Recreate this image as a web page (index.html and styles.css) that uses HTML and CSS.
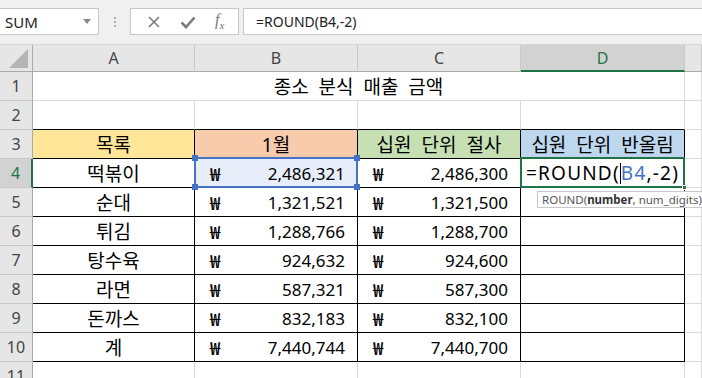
FILE: index.html
```html
<!DOCTYPE html>
<html lang="ko">
<head>
    <meta charset="UTF-8">
    <title>종소 분식 매출 금액</title>
    <link rel="stylesheet" href="styles.css">
</head>
<body>
    <div class="toolbar">
        <div class="nameBox">
            <span>SUM</span>
            <svg class="arrow" width="8" height="5" viewBox="0 0 8 5"><path d="M0 0h8L4 5z" fill="#8a8a8a"/></svg>
        </div>
        <div class="grip"><i></i><i></i><i></i></div>
        <div class="fnBox">
            <svg width="14" height="14" viewBox="0 0 14 14"><path d="M2 2l10 10M12 2L2 12" stroke="#7a7a7a" stroke-width="1.6"/></svg>
            <svg width="16" height="14" viewBox="0 0 16 14"><path d="M1.5 7.5l4.5 4.5L14.5 2.5" stroke="#7a7a7a" stroke-width="2.6" fill="none"/></svg>
            <span class="fx"><i>f</i><sub>x</sub></span>
        </div>
        <div class="formula">=ROUND(B4,-2)</div>
    </div>

    <div class="sheet">
        <!-- header row -->
        <div class="corner"><span class="tri"></span></div>
        <div class="colHead">A</div>
        <div class="colHead">B</div>
        <div class="colHead">C</div>
        <div class="colHead sel">D</div>
        <div class="colHead"></div>

        <!-- row 1 -->
        <div class="rowHead">1</div>
        <div class="cell title kr">종소 분식 매출 금액</div>
        <div class="cell"></div>

        <!-- row 2 -->
        <div class="rowHead">2</div>
        <div class="cell top"></div>
        <div class="cell top"></div>
        <div class="cell top"></div>
        <div class="cell top"></div>
        <div class="cell"></div>

        <!-- row 3 -->
        <div class="rowHead">3</div>
        <div class="cell box center kr yellow">목록</div>
        <div class="cell box center kr peach">1월</div>
        <div class="cell box center kr green">십원 단위 절사</div>
        <div class="cell box center kr blue">십원 단위 반올림</div>
        <div class="cell"></div>

        <!-- row 4 -->
        <div class="rowHead active">4</div>
        <div class="cell box center kr">떡볶이</div>
        <div class="cell box money ref">
            <span class="won">₩</span><span>2,486,321</span>
            <b class="h tl"></b><b class="h tr"></b><b class="h bl"></b><b class="h br"></b>
        </div>
        <div class="cell box money"><span class="won">₩</span><span>2,486,300</span></div>
        <div class="cell box editing">
            <span>=ROUND(</span><span class="caret"></span><span class="refText">B4</span><span>,-2)</span>
            <b class="fill"></b>
            <div class="tip">ROUND(<b>number</b>, num_digits)</div>
        </div>
        <div class="cell"></div>

        <!-- row 5 -->
        <div class="rowHead">5</div>
        <div class="cell box center kr">순대</div>
        <div class="cell box money"><span class="won">₩</span><span>1,321,521</span></div>
        <div class="cell box money"><span class="won">₩</span><span>1,321,500</span></div>
        <div class="cell box"></div>
        <div class="cell"></div>

        <!-- row 6 -->
        <div class="rowHead">6</div>
        <div class="cell box center kr">튀김</div>
        <div class="cell box money"><span class="won">₩</span><span>1,288,766</span></div>
        <div class="cell box money"><span class="won">₩</span><span>1,288,700</span></div>
        <div class="cell box"></div>
        <div class="cell"></div>

        <!-- row 7 -->
        <div class="rowHead">7</div>
        <div class="cell box center kr">탕수육</div>
        <div class="cell box money"><span class="won">₩</span><span>924,632</span></div>
        <div class="cell box money"><span class="won">₩</span><span>924,600</span></div>
        <div class="cell box"></div>
        <div class="cell"></div>

        <!-- row 8 -->
        <div class="rowHead">8</div>
        <div class="cell box center kr">라면</div>
        <div class="cell box money"><span class="won">₩</span><span>587,321</span></div>
        <div class="cell box money"><span class="won">₩</span><span>587,300</span></div>
        <div class="cell box"></div>
        <div class="cell"></div>

        <!-- row 9 -->
        <div class="rowHead">9</div>
        <div class="cell box center kr">돈까스</div>
        <div class="cell box money"><span class="won">₩</span><span>832,183</span></div>
        <div class="cell box money"><span class="won">₩</span><span>832,100</span></div>
        <div class="cell box"></div>
        <div class="cell"></div>

        <!-- row 10 -->
        <div class="rowHead">10</div>
        <div class="cell box center kr">계</div>
        <div class="cell box money"><span class="won">₩</span><span>7,440,744</span></div>
        <div class="cell box money"><span class="won">₩</span><span>7,440,700</span></div>
        <div class="cell box"></div>
        <div class="cell"></div>

        <!-- row 11 -->
        <div class="rowHead">11</div>
        <div class="cell"></div>
        <div class="cell"></div>
        <div class="cell"></div>
        <div class="cell"></div>
        <div class="cell"></div>
    </div>
</body>
</html>
```

FILE: styles.css
```css
* {
    box-sizing: border-box;
}

body {
    margin: 0;
    width: 702px;
    height: 378px;
    overflow: hidden;
    background-color: #fff;
    font-family: "Noto Sans", "Noto Sans CJK KR", sans-serif;
    color: #000;
}

/* ---------- formula bar ---------- */

.toolbar {
    height: 45px;
    background-color: #f0f0f0;
    display: flex;
    align-items: flex-start;
    padding-top: 8px;
    border-bottom: 1px solid #d6d6d6;
}

.nameBox {
    width: 99px;
    height: 27px;
    background-color: #fff;
    border: 1px solid #c6c6c6;
    border-left: none;
    display: flex;
    align-items: center;
    justify-content: space-between;
    padding: 0 7px 0 5px;
    font-size: 15px;
    color: #222;
}

.grip {
    width: 31px;
    height: 27px;
    display: flex;
    flex-direction: column;
    align-items: center;
    justify-content: center;
    gap: 2px;
}

.grip i {
    width: 2px;
    height: 2px;
    background-color: #b0b0b0;
}

.fnBox {
    width: 109px;
    height: 27px;
    background-color: #fff;
    border: 1px solid #c6c6c6;
    display: flex;
    align-items: center;
    justify-content: space-around;
    padding: 0 4px 0 6px;
}

.fx {
    font-family: "Liberation Serif", serif;
    font-size: 16px;
    color: #777;
}

.fx sub {
    font-size: 11px;
    font-style: italic;
}

.formula {
    flex: 1;
    height: 27px;
    margin-left: 4px;
    background-color: #fff;
    border: 1px solid #c6c6c6;
    border-right: none;
    padding-left: 12px;
    font-size: 14px;
    line-height: 25px;
    color: #222;
}

/* ---------- sheet grid ---------- */

.sheet {
    display: grid;
    grid-template-columns: 33px 162px 163px 163px 164px 1fr;
    grid-template-rows: 27px repeat(11, 29px);
}

.corner,
.colHead,
.rowHead {
    background-color: #e6e6e6;
    color: #444;
    font-size: 16px;
    display: flex;
    align-items: center;
    justify-content: center;
}

.corner {
    border-right: 1px solid #ababab;
    border-bottom: 1px solid #ababab;
    position: relative;
}

.tri {
    position: absolute;
    right: 4px;
    bottom: 3px;
    width: 0;
    height: 0;
    border-left: 19px solid transparent;
    border-bottom: 19px solid #b5b5b5;
}

.colHead {
    border-right: 1px solid #c8c8c8;
    border-bottom: 1px solid #ababab;
}

.colHead.sel {
    background-color: #d2d2d2;
    color: #217346;
    border-bottom: 2px solid #217346;
}

.rowHead {
    border-right: 1px solid #ababab;
    border-bottom: 1px solid #c8c8c8;
}

.rowHead.active {
    background-color: #d2d2d2;
    color: #217346;
    border-right: 2px solid #217346;
}

.cell {
    border-right: 1px solid #dadada;
    border-bottom: 1px solid #dadada;
    font-size: 17px;
    display: flex;
    align-items: center;
    white-space: nowrap;
    position: relative;
}

.kr {
    font-size: 19px;
    word-spacing: 5px;
}

.title {
    grid-column: span 4;
    justify-content: center;
}

.top {
    border-bottom-color: #000;
}

.box {
    border-right-color: #000;
    border-bottom-color: #000;
}

.center {
    justify-content: center;
}

.money {
    justify-content: space-between;
    padding: 0 12px 0 15px;
}

.won {
    font-family: "Noto Sans CJK KR", sans-serif;
    font-size: 18px;
    font-weight: 500;
}

.yellow { background-color: #ffe699; }
.peach { background-color: #f8cbad; }
.green { background-color: #c6e0b4; }
.blue { background-color: #bdd7ee; }

/* B4 reference highlight */
.ref {
    background-color: #e8eef9;
}

.ref::after {
    content: "";
    position: absolute;
    top: -2px;
    left: -1px;
    right: -1px;
    bottom: -1px;
    border: 2px solid #4472c4;
}

.h {
    position: absolute;
    width: 6px;
    height: 6px;
    background-color: #4472c4;
    z-index: 2;
}

.tl { top: -4px; left: -3px; }
.tr { top: -4px; right: -3px; }
.bl { bottom: -3px; left: -3px; }
.br { bottom: -3px; right: -3px; }

/* D4 edit mode */
.editing {
    padding-left: 5px;
    font-size: 19px;
    letter-spacing: 1.2px;
}

.editing::after {
    content: "";
    position: absolute;
    top: -2px;
    left: -1px;
    right: -1px;
    bottom: -1px;
    border: 2px solid #217346;
}

.refText {
    color: #4472c4;
}

.caret {
    width: 1px;
    height: 21px;
    background-color: #000;
}

.fill {
    position: absolute;
    right: -3px;
    bottom: -3px;
    width: 5px;
    height: 5px;
    background-color: #217346;
    border: 1px solid #fff;
    z-index: 2;
}

.tip {
    position: absolute;
    top: 32px;
    left: 16px;
    height: 17px;
    padding: 0 4px;
    background-color: #fff;
    border: 1px solid #c8c8c8;
    font-size: 11.5px;
    letter-spacing: 0;
    line-height: 15px;
    color: #555;
    z-index: 3;
}

.tip b {
    color: #333;
}
```
